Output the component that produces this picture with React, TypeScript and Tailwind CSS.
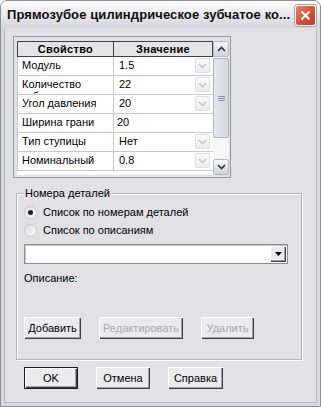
import React from "react";

const rows = [
  { l: "Модуль", v: "1.5", dd: true, pl: "pl-[5px]" },
  { l: "Количество зубьев", v: "22", dd: true, pl: "pl-[5px]" },
  { l: "Угол давления", v: "20", dd: true, pl: "pl-[5px]" },
  { l: "Ширина грани", v: "20", dd: false, pl: "pl-[3px]" },
  { l: "Тип ступицы", v: "Нет", dd: true, pl: "pl-[5px]" },
  { l: "Номинальный диаметр вала", v: "0.8", dd: true, pl: "pl-[5px]" },
];

function Chevron({ color, up }: { color: string; up?: boolean }) {
  return (
    <svg width="9" height="6" viewBox="0 0 9 6">
      <path
        d={up ? "M1 5 L4.5 1.5 L8 5" : "M1 1 L4.5 4.5 L8 1"}
        fill="none"
        stroke={color}
        strokeWidth="1.6"
      />
    </svg>
  );
}

function CellDrop() {
  return (
    <div className="w-[15px] h-[15px] mr-[3px] mt-[1px] flex items-center justify-center rounded-[2px] border border-[#dcdce2] bg-gradient-to-b from-[#fbfbfb] to-[#ececf0]">
      <Chevron color="#c4c4cc" />
    </div>
  );
}

function WinButton({
  label,
  w,
  disabled,
  def,
}: {
  label: string;
  w: string;
  disabled?: boolean;
  def?: boolean;
}) {
  return (
    <div
      className={`${w} h-[22px] flex items-center justify-center text-[11px] bg-[#ebeaef] ${
        def ? "border border-[#1a1a1a]" : ""
      } shadow-[inset_1px_1px_0_#ffffff,inset_-1px_-1px_0_#404040,inset_-2px_-2px_0_#a0a0a8] ${
        disabled ? "text-[#a8a8b0]" : "text-black"
      }`}
    >
      {label}
    </div>
  );
}

function Radio({ checked, label }: { checked?: boolean; label: string }) {
  return (
    <div className="flex items-center h-[18px]">
      <div className="w-[13px] h-[13px] rounded-full border border-[#c8c8d0] bg-gradient-to-br from-[#dcdce2] to-[#ffffff] flex items-center justify-center">
        {checked && <div className="w-[5px] h-[5px] rounded-full bg-[#202020]" />}
      </div>
      <span className="ml-[6px] text-[11px] text-black">{label}</span>
    </div>
  );
}

export default function App() {
  return (
    <div className="w-[321px] h-[407px] overflow-hidden bg-white font-['Liberation_Sans',Arial,sans-serif]">
      <div className="w-[321px] h-[407px] flex flex-col rounded-t-[7px] border border-[#8e8e9a] bg-[#d8d8de]">
        {/* Title bar */}
        <div className="h-[27px] shrink-0 flex items-center rounded-t-[6px] bg-gradient-to-b from-[#fdfdfd] via-[#e9e9ed] to-[#d4d4dc] pl-[6px] pr-[4px]">
          <span className="text-[13px] font-bold text-[#101010] tracking-[0.1px] flex-1 whitespace-nowrap">
            Прямозубое цилиндрическое зубчатое ко...
          </span>
          <div className="w-[21px] h-[21px] mt-[2px] rounded-[3px] border border-white bg-gradient-to-br from-[#e8826a] via-[#d4523a] to-[#b83c26] flex items-center justify-center shadow-[0_0_0_1px_#b0a0a0]">
            <svg width="11" height="11" viewBox="0 0 11 11">
              <path d="M1.5 1.5 L9.5 9.5 M9.5 1.5 L1.5 9.5" stroke="white" strokeWidth="2" />
            </svg>
          </div>
        </div>

        {/* Body */}
        <div className="flex-1 mx-[3px] mb-[3px] bg-[#e1e0e5] border-x border-b border-[#b8b8c4] flex flex-col">
          {/* Property grid panel */}
          <div className="ml-[8px] mt-[8px] w-[218px] h-[142px] border border-[#9a9aa2] bg-[#e1e0e5] pl-[3px] pt-[4px]">
            <div className="flex h-[134px]">
              <div className="w-[196px] h-[134px] overflow-hidden bg-white">
                {/* header */}
                <div className="flex h-[16px] border-y border-[#404048] bg-[#e4e4e8] text-[11px] font-bold">
                  <div className="w-[97px] border-x border-[#404048] flex items-center justify-center tracking-[0.3px]">
                    Свойство
                  </div>
                  <div className="flex-1 border-r border-[#404048] flex items-center justify-center tracking-[0.3px]">
                    Значение
                  </div>
                </div>
                {rows.map((r, i) => (
                  <div key={i} className="flex h-[19px] overflow-hidden border-b border-[#c8c8cc] text-[11px] leading-[12px]">
                    <div className="w-[97px] h-[18px] pl-[4px] pt-[2px] overflow-hidden border-l border-r border-[#c8c8cc]">
                      {r.l}
                    </div>
                    <div className="flex-1 flex">
                      <div className={`flex-1 ${r.pl} pt-[2px]`}>{r.v}</div>
                      {r.dd && <CellDrop />}
                    </div>
                  </div>
                ))}
              </div>
              {/* scrollbar */}
              <div className="w-[16px] h-[134px] bg-[#f6f6f4] flex flex-col">
                <div className="h-[16px] rounded-[2px] border border-[#b8b8c8] bg-gradient-to-b from-[#f4f4f8] to-[#d4d4de] flex items-center justify-center">
                  <Chevron color="#303040" up />
                </div>
                <div className="flex-1 flex flex-col">
                  <div className="mt-[1px] h-[80px] rounded-[2px] border border-[#b0b0c2] bg-gradient-to-r from-[#e6e6ee] to-[#d8d8e2] flex items-center justify-center">
                    <div className="flex flex-col gap-[1px]">
                      <div className="w-[7px] h-[1px] bg-[#8c8ca0]" />
                      <div className="w-[7px] h-[1px] bg-[#8c8ca0]" />
                      <div className="w-[7px] h-[1px] bg-[#8c8ca0]" />
                    </div>
                  </div>
                </div>
                <div className="h-[16px] rounded-[2px] border border-[#b8b8c8] bg-gradient-to-b from-[#f4f4f8] to-[#d4d4de] flex items-center justify-center">
                  <Chevron color="#303040" />
                </div>
              </div>
            </div>
          </div>

          {/* Group box */}
          <div className="ml-[11px] mt-[15px] w-[286px] h-[167px] border border-[#b4b4bc] shadow-[inset_1px_1px_0_#ffffff,1px_1px_0_#ffffff] flex flex-col pl-[7px]">
            <div className="-mt-[8px] h-[14px] flex">
              <span className="px-[1px] bg-[#e1e0e5] text-[11px] text-black leading-[14px]">Номера деталей</span>
            </div>
            <div className="mt-[3px]">
              <Radio checked label="Список по номерам деталей" />
            </div>
            <Radio label="Список по описаниям" />
            <div className="mt-[5px] w-[264px] h-[20px] bg-white border border-[#8c8c94] shadow-[inset_1px_1px_0_#c8c8cc] flex justify-end items-center pr-[1px]">
              <div className="w-[16px] h-[16px] bg-[#ebeaef] shadow-[inset_1px_1px_0_#ffffff,inset_-1px_-1px_0_#404040,inset_-2px_-2px_0_#a0a0a8] flex items-center justify-center">
                <svg width="7" height="4" viewBox="0 0 7 4">
                  <path d="M0 0 L7 0 L3.5 4 Z" fill="#000" />
                </svg>
              </div>
            </div>
            <div className="mt-[7px] text-[11px] text-black leading-[14px]">Описание:</div>
            <div className="mt-[32px] flex">
              <WinButton label="Добавить" w="w-[57px]" />
              <div className="ml-[18px]">
                <WinButton label="Редактировать" w="w-[84px]" disabled />
              </div>
              <div className="ml-[18px]">
                <WinButton label="Удалить" w="w-[53px]" disabled />
              </div>
            </div>
          </div>

          {/* Bottom buttons */}
          <div className="mt-[7px] ml-[19px] flex">
            <WinButton label="OK" w="w-[54px]" def />
            <div className="ml-[18px]">
              <WinButton label="Отмена" w="w-[54px]" />
            </div>
            <div className="ml-[18px]">
              <WinButton label="Справка" w="w-[55px]" />
            </div>
          </div>
        </div>
      </div>
    </div>
  );
}
